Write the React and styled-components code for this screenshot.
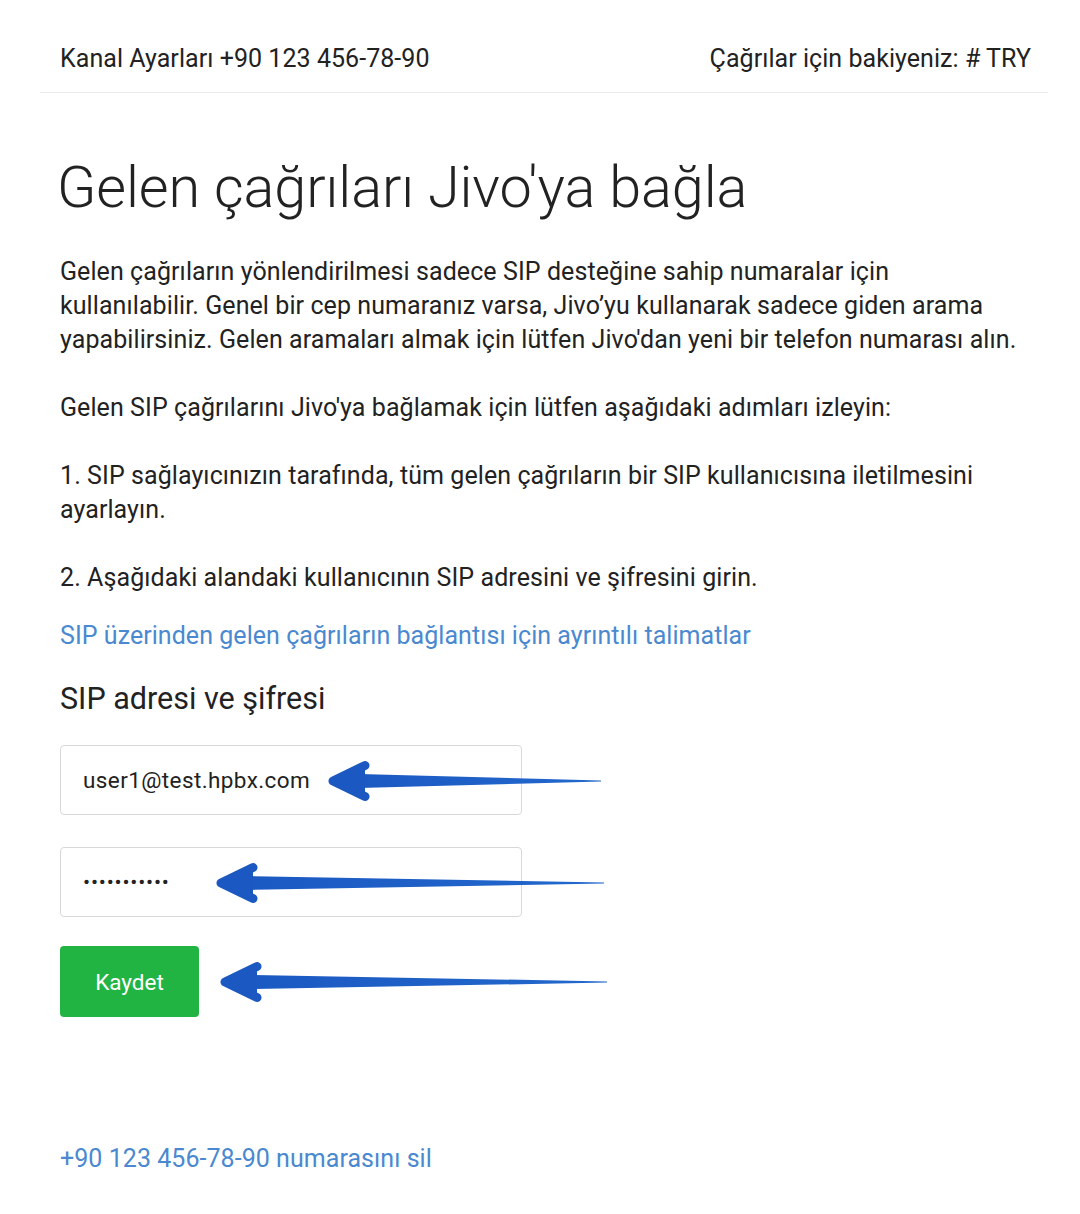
import React from "react";
import styled, { createGlobalStyle } from "styled-components";

const Global = createGlobalStyle`
  html, body { margin: 0; padding: 0; background: #fff; }
  body { font-family: Roboto, "Noto Sans", Arial, sans-serif; color: #222; }
`;

const Page = styled.div`
  width: 1080px;
  min-height: 1214px;
  box-sizing: border-box;
`;

const Header = styled.header`
  margin: 0 32px 0 40px;
  height: 93px;
  box-sizing: border-box;
  padding: 24px 17px 0 20px;
  display: flex;
  align-items: center;
  justify-content: space-between;
  border-bottom: 1px solid #ececec;
  font-size: 25px;
  letter-spacing: 0.05px;
  color: #222;
`;

const Main = styled.main`
  padding: 0 60px;
  display: flex;
  flex-direction: column;
`;

const Title = styled.h1`
  margin: 57px 0 0 -3px;
  font-size: 57.6px;
  font-weight: 300;
  line-height: 76px;
  letter-spacing: -0.1px;
  color: #222;
`;

const Para = styled.p`
  margin: ${(p) => p.$top || 0}px 0 0;
  font-size: 25px;
  line-height: 34px;
  letter-spacing: 0.08px;
  color: #222;
`;

const Link = styled.a`
  display: block;
  margin-top: ${(p) => p.$top || 0}px;
  font-size: 25px;
  line-height: 34px;
  letter-spacing: 0.05px;
  color: #4a89d0;
  text-decoration: none;
`;

const Subtitle = styled.h2`
  margin: 28px 0 0;
  font-size: 30.5px;
  font-weight: 400;
  line-height: 36px;
  color: #222;
`;

const Field = styled.div`
  position: relative;
  margin-top: ${(p) => p.$top}px;
  width: 462px;
  height: ${(p) => p.$h || 70}px;
`;

const Input = styled.div`
  box-sizing: border-box;
  width: 462px;
  height: 70px;
  border: 1.5px solid #d6d8da;
  border-radius: 4px;
  display: flex;
  align-items: center;
  padding-left: 22px;
  font-size: ${(p) => (p.$dots ? "21px" : "22.5px")};
  color: #222;
  letter-spacing: ${(p) => (p.$dots ? "0.8px" : "0.4px")};
`;

const Button = styled.button`
  width: 139px;
  height: 71px;
  border: none;
  border-radius: 4px;
  background: #21b443;
  color: #fff;
  font-family: Roboto, "Noto Sans", Arial, sans-serif;
  font-size: 22.5px;
  cursor: pointer;
`;

const ArrowSvg = styled.svg`
  position: absolute;
  left: 0;
  top: 0;
  overflow: visible;
  pointer-events: none;
`;

function Arrow({ tipX, tailX, y, id }) {
  const head = 32;
  return (
    <ArrowSvg width="620" height="70">
      <defs>
        <linearGradient id={id} x1="0" x2="1" y1="0" y2="0">
          <stop offset="0" stopColor="#1b58c2" />
          <stop offset="1" stopColor="#2268cc" />
        </linearGradient>
      </defs>
      <path
        d={`M ${tipX + 6} ${y - 4} L ${tipX + 26} ${y - 7} L ${tailX} ${y - 0.6} L ${tailX} ${y + 0.6} L ${tipX + 26} ${y + 7} L ${tipX + 6} ${y + 4} Z`}
        fill={`url(#${id})`}
      />
      <path
        d={`M ${tipX + head} ${y - 15.5} L ${tipX} ${y} L ${tipX + head} ${y + 15.5}`}
        fill="#1b58c2"
        stroke="#1b58c2"
        strokeWidth="9"
        strokeLinecap="round"
        strokeLinejoin="round"
      />
    </ArrowSvg>
  );
}

export default function App() {
  return (
    <Page>
      <Global />
      <Header>
        <span>Kanal Ayarları +90 123 456-78-90</span>
        <span>Çağrılar için bakiyeniz: # TRY</span>
      </Header>
      <Main>
        <Title>Gelen çağrıları Jivo'ya bağla</Title>
        <Para $top={29}>
          Gelen çağrıların yönlendirilmesi sadece SIP desteğine sahip numaralar için
          kullanılabilir. Genel bir cep numaranız varsa, Jivo’yu kullanarak sadece giden arama
          yapabilirsiniz. Gelen aramaları almak için lütfen Jivo'dan yeni bir telefon numarası alın.
        </Para>
        <Para $top={34}>
          Gelen SIP çağrılarını Jivo'ya bağlamak için lütfen aşağıdaki adımları izleyin:
        </Para>
        <Para $top={34}>
          1. SIP sağlayıcınızın tarafında, tüm gelen çağrıların bir SIP kullanıcısına iletilmesini
          ayarlayın.
        </Para>
        <Para $top={34}>2. Aşağıdaki alandaki kullanıcının SIP adresini ve şifresini girin.</Para>
        <Link href="#" $top={24}>
          SIP üzerinden gelen çağrıların bağlantısı için ayrıntılı talimatlar
        </Link>
        <Subtitle>SIP adresi ve şifresi</Subtitle>
        <Field $top={28}>
          <Input>user1@test.hpbx.com</Input>
          <Arrow id="g1" tipX={273} tailX={541} y={36} />
        </Field>
        <Field $top={32}>
          <Input $dots>•••••••••••</Input>
          <Arrow id="g2" tipX={161} tailX={544} y={36} />
        </Field>
        <Field $top={29} $h={71}>
          <Button>Kaydet</Button>
          <Arrow id="g3" tipX={165} tailX={547} y={36} />
        </Field>
        <Link href="#" $top={125}>
          +90 123 456-78-90 numarasını sil
        </Link>
      </Main>
    </Page>
  );
}
